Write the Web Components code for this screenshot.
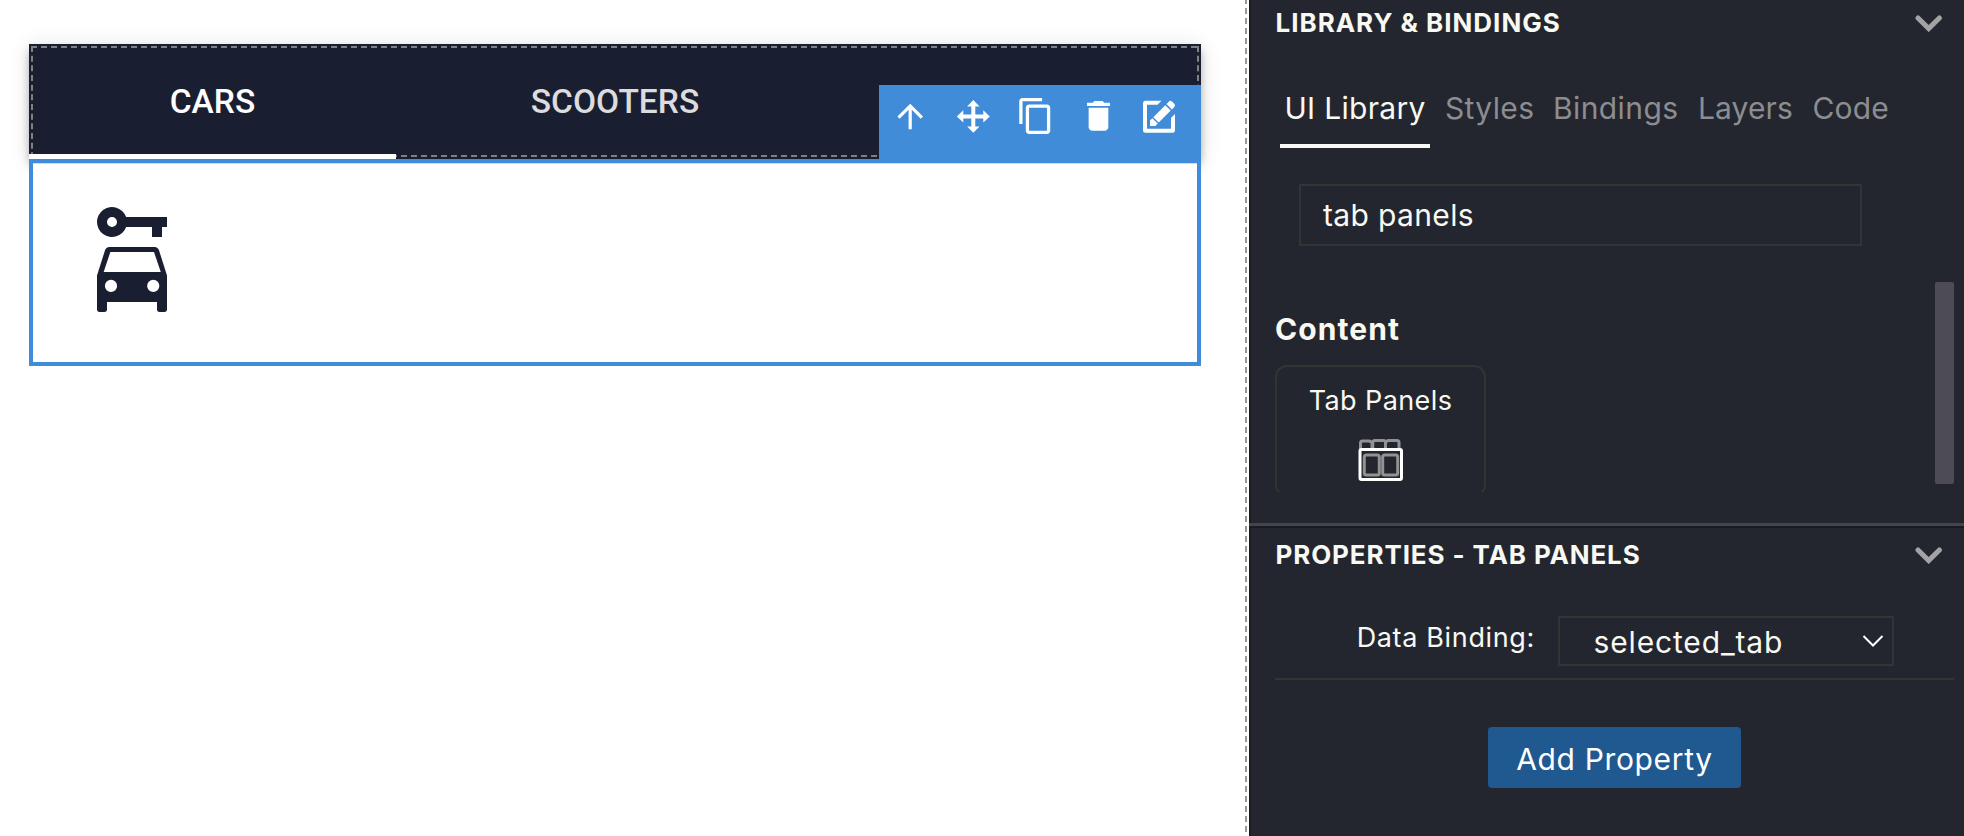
<!DOCTYPE html>
<html lang="en"><head><meta charset="utf-8"><title>UI Builder</title>
<style>html,body{margin:0;height:100%;overflow:hidden;background:#fff}</style></head>
<body><builder-app></builder-app>
<script>
const define=(name,html)=>customElements.define(name,class extends HTMLElement{
  constructor(){super();this.attachShadow({mode:'open'}).innerHTML=html;}
});

define('tab-item',`<style>
:host{display:flex;align-items:center;justify-content:center;height:115px;box-sizing:border-box;font:500 33.5px/40px Roboto,sans-serif;letter-spacing:.05px;color:#dcdcde;width:438px}
:host([active]){width:367px;color:#fff;box-shadow:inset 0 -5px #fff}
</style><slot></slot>`);

define('tab-bar',`<style>
:host{display:flex;position:relative;height:115px;background:#1a1e31;box-shadow:0 4px 8px -2px rgba(0,0,0,.2),0 8px 10px rgba(0,0,0,.14),0 2px 20px rgba(0,0,0,.12)}
svg{position:absolute;left:0;top:0}
::slotted(*){position:relative}
</style><svg width="1172" height="115" fill="none" stroke="#7f8084" stroke-width="2" stroke-dasharray="6 4"><path d="M2 3H1170M2 112H1170"/><path stroke-dasharray="6 3.67" d="M3 2V113M1169 2V113"/></svg><slot></slot>`);

define('selection-toolbar',`<style>
:host{position:absolute;right:-4px;top:-78px;width:322px;height:78px;background:#418cd8}
svg{display:block}
</style><svg width="322" height="78" fill="#fff">
<g transform="translate(12 12.3) scale(1.6)"><path d="M4 12l1.41 1.41L11 7.83V20h2V7.83l5.58 5.59L20 12l-8-8-8 8z"/></g>
<g transform="translate(94.3 31.4)"><path d="M0-16.5 6.2-10H2V-2H10V-6.2L16.5 0 10 6.2V2H2V10H6.2L0 16.3-6.2 10H-2V2H-10V6.2L-16.5 0-10-6.2V-2H-2V-10H-6.2Z"/></g>
<g transform="translate(137 11.4) scale(1.63)"><path d="M16 1H4c-1.1 0-2 .9-2 2v14h2V3h12V1zm3 4H8c-1.1 0-2 .9-2 2v14c0 1.1.9 2 2 2h11c1.1 0 2-.9 2-2V7c0-1.1-.9-2-2-2zm0 16H8V7h11v14z"/></g>
<g transform="translate(199.8 11.2) scale(1.64)"><path d="M6 19c0 1.1.9 2 2 2h8c1.1 0 2-.9 2-2V7H6v12zM19 4h-3.500l-1-1h-5l-1 1H5v2h14V4z"/></g>
<path d="M282.500 15.700H266.500Q264 15.700 264 18.200V45.200Q264 47.700 266.500 47.700H293.500Q296 47.700 296 45.200V29L292 33V43.700H268V19.700H278.500Z"/>
<path d="M271 41V35.500L273.300 33.200 278.700 38.600 276.400 41ZM274.300 32.200 286.300 20.200 291.700 25.600 279.700 37.600ZM287.500 19 290 16.500Q291.500 15 293 16.500L295.300 18.800Q296.800 20.300 295.300 21.900L292.900 24.400Z"/>
</svg>`);

define('tab-content',`<style>
:host{display:block;position:relative;box-sizing:border-box;height:207px;border:4px solid #418cd8;background:linear-gradient(#d8dade 1px,#fff 1px)}
svg{display:block;margin:38.7px 0 0 39px}
</style><svg width="120" height="120" viewBox="0 0 24 24" fill="#1a1e31"><path fill-rule="evenodd" d="M10.83 3A3 3 0 1 0 10.83 5H16V7H18V5H19V3ZM8 5A1 1 0 1 1 8 3A1 1 0 1 1 8 5ZM17.4 9.660C17.250 9.260 16.980 9 16.500 9H7.500C7.020 9 6.750 9.260 6.600 9.660L5 14.700V21.500C5 21.800 5.200 22 5.500 22H6.500C6.800 22 7 21.800 7 21.500V20H17V21.500C17 21.800 17.200 22 17.500 22H18.500C18.800 22 19 21.800 19 21.500V14.700ZM7.670 10H16.400L17.750 14H6.330ZM7.800 18A1.220 1.220 0 1 1 7.800 15.560A1.220 1.220 0 1 1 7.800 18ZM16.250 18A1.220 1.220 0 1 1 16.250 15.560A1.220 1.220 0 1 1 16.250 18Z"/></svg><slot></slot>`);

define('design-canvas',`<style>
:host{display:block;box-sizing:border-box;width:1249px;padding:44px 48px 0 29px;height:836px;background:repeating-linear-gradient(#999 0 4px,#fff 4px 8px,#999 8px 9.970px) 1245px 0/2px 100% no-repeat #fff}
</style><tab-bar><tab-item active>CARS</tab-item><tab-item>SCOOTERS</tab-item></tab-bar><tab-content><selection-toolbar></selection-toolbar></tab-content>`);

define('section-header',`<style>
:host{display:flex;align-items:center;justify-content:space-between;height:45px;padding:0 21px 0 26.500px;font-weight:700;font-size:26px;letter-spacing:var(--heading-spacing,.98px)}
</style><span><slot></slot></span><svg width="28" height="18" fill="none" stroke="#a3a3a3" stroke-width="5" stroke-linecap="round"><path d="M3 3.900 13.700 14.600 24.400 3.900"/></svg>`);

define('library-tab',`<style>
:host{display:block;box-sizing:border-box;height:74px;padding-top:15px;line-height:38px;font-size:30px;letter-spacing:.3px;color:#8c8d90;white-space:nowrap}
:host([active]){color:#f8f9f2;border-bottom:4px solid #f8f9f2;width:150px;padding-left:4.500px;margin-right:15px}
</style><span><slot></slot></span>`);

define('search-field',`<style>
:host{display:flex;align-items:center;box-sizing:border-box;width:563px;height:62px;margin:36px 0 0 50px;border:2px solid #353435;padding-left:22px;font-size:30px;letter-spacing:.35px}
</style><span><slot></slot></span>`);

define('library-card',`<style>
:host{display:flex;flex-direction:column;align-items:center;box-sizing:border-box;width:211px;height:132px;border:2px solid #353435;border-radius:12px;padding-top:16px;font-size:27px;line-height:36px;letter-spacing:.4px}
svg{margin-top:19px;margin-left:1px}
</style><span><slot></slot></span><svg width="46" height="44" fill="none" stroke-width="3"><g stroke="#929292"><path d="M2.500 11V5Q2.500 3 4.500 3H11Q13 3 13 5M14.800 11V4.500Q14.800 2.500 16.800 2.500H25.500Q27.500 2.500 27.500 4.500V11M28.500 4.500Q28.500 2.500 30.500 2.500H39Q41 2.500 41 4.500V11M14 5V11"/><rect x="6.300" y="17" width="15" height="20" rx="2"/><rect x="24.700" y="17" width="15" height="20" rx="2"/></g><rect x="2" y="11.500" width="41.500" height="30" rx="1.500" stroke="#fff"/></svg>`);

define('library-section',`<style>
:host{display:block;position:relative;height:523px;box-sizing:border-box}
nav{display:flex;padding:29px 0 0 31px}
.styles{width:108px;letter-spacing:.35px}
.bindings{width:145px;letter-spacing:.4px}
.layers{width:114.500px;letter-spacing:.1px}
.code{letter-spacing:.15px}
h3{margin:65px 0 0 26px;height:36px;line-height:36px;font-size:30px;font-weight:700;letter-spacing:1.1px}
.clip{height:127px;overflow:hidden;margin:18px 0 0 26px}
i{position:absolute;right:10px;top:282px;width:19px;height:202px;border-radius:2px;background:#4d4c55}
</style><section-header>LIBRARY &amp; BINDINGS</section-header>
<nav><library-tab active>UI Library</library-tab><library-tab class="styles">Styles</library-tab><library-tab class="bindings">Bindings</library-tab><library-tab class="layers">Layers</library-tab><library-tab class="code">Code</library-tab></nav>
<search-field>tab panels</search-field><h3><span>Content</span></h3><div class="clip"><library-card>Tab Panels</library-card></div><i></i>`);

define('properties-section',`<style>
:host{display:block;border-top:3px solid #43454d;box-shadow:inset 0 2px #1a1b20;padding-top:6px;--heading-spacing:.88px}
.row{display:flex;height:52px;border-bottom:2px solid #353435;margin:0 10px 0 26px;padding:39px 0 10px}
.label{width:260px;margin-right:23px;text-align:right;font-size:27px;line-height:44px;letter-spacing:.65px;white-space:nowrap}
.select{display:flex;align-items:center;justify-content:space-between;box-sizing:border-box;width:336px;height:50px;border:2px solid #353435;padding:2px 8px 0 33.500px;font-size:30px;letter-spacing:.85px}
.select svg{margin-bottom:2px}
.button{display:flex;align-items:center;justify-content:center;width:253px;height:61px;box-sizing:border-box;padding-top:2px;margin:47px 0 0 239px;border-radius:4px;background:#20598f;color:#fff;font-size:30px;letter-spacing:.65px}
</style><section-header>PROPERTIES - TAB PANELS</section-header>
<div class="row"><div class="label"><span>Data Binding:</span></div><div class="select"><span>selected_tab</span><svg width="22" height="14" fill="none" stroke="#fff" stroke-width="2"><path d="M1.500 2 11 11.500 20.500 2"/></svg></div></div>
<div class="button"><span>Add Property</span></div>`);

define('side-panel',`<style>
:host{display:block;box-sizing:border-box;width:715px;height:836px;background:#24262f;box-shadow:inset 2px 0 #1b1c22;color:#f8f9f2;font:400 30px/1.2 Inter,sans-serif}
</style><library-section></library-section><properties-section></properties-section>`);

define('builder-app',`<style>:host{display:flex;width:1964px;height:836px}</style><design-canvas></design-canvas><side-panel></side-panel>`);
</script>
</body></html>
